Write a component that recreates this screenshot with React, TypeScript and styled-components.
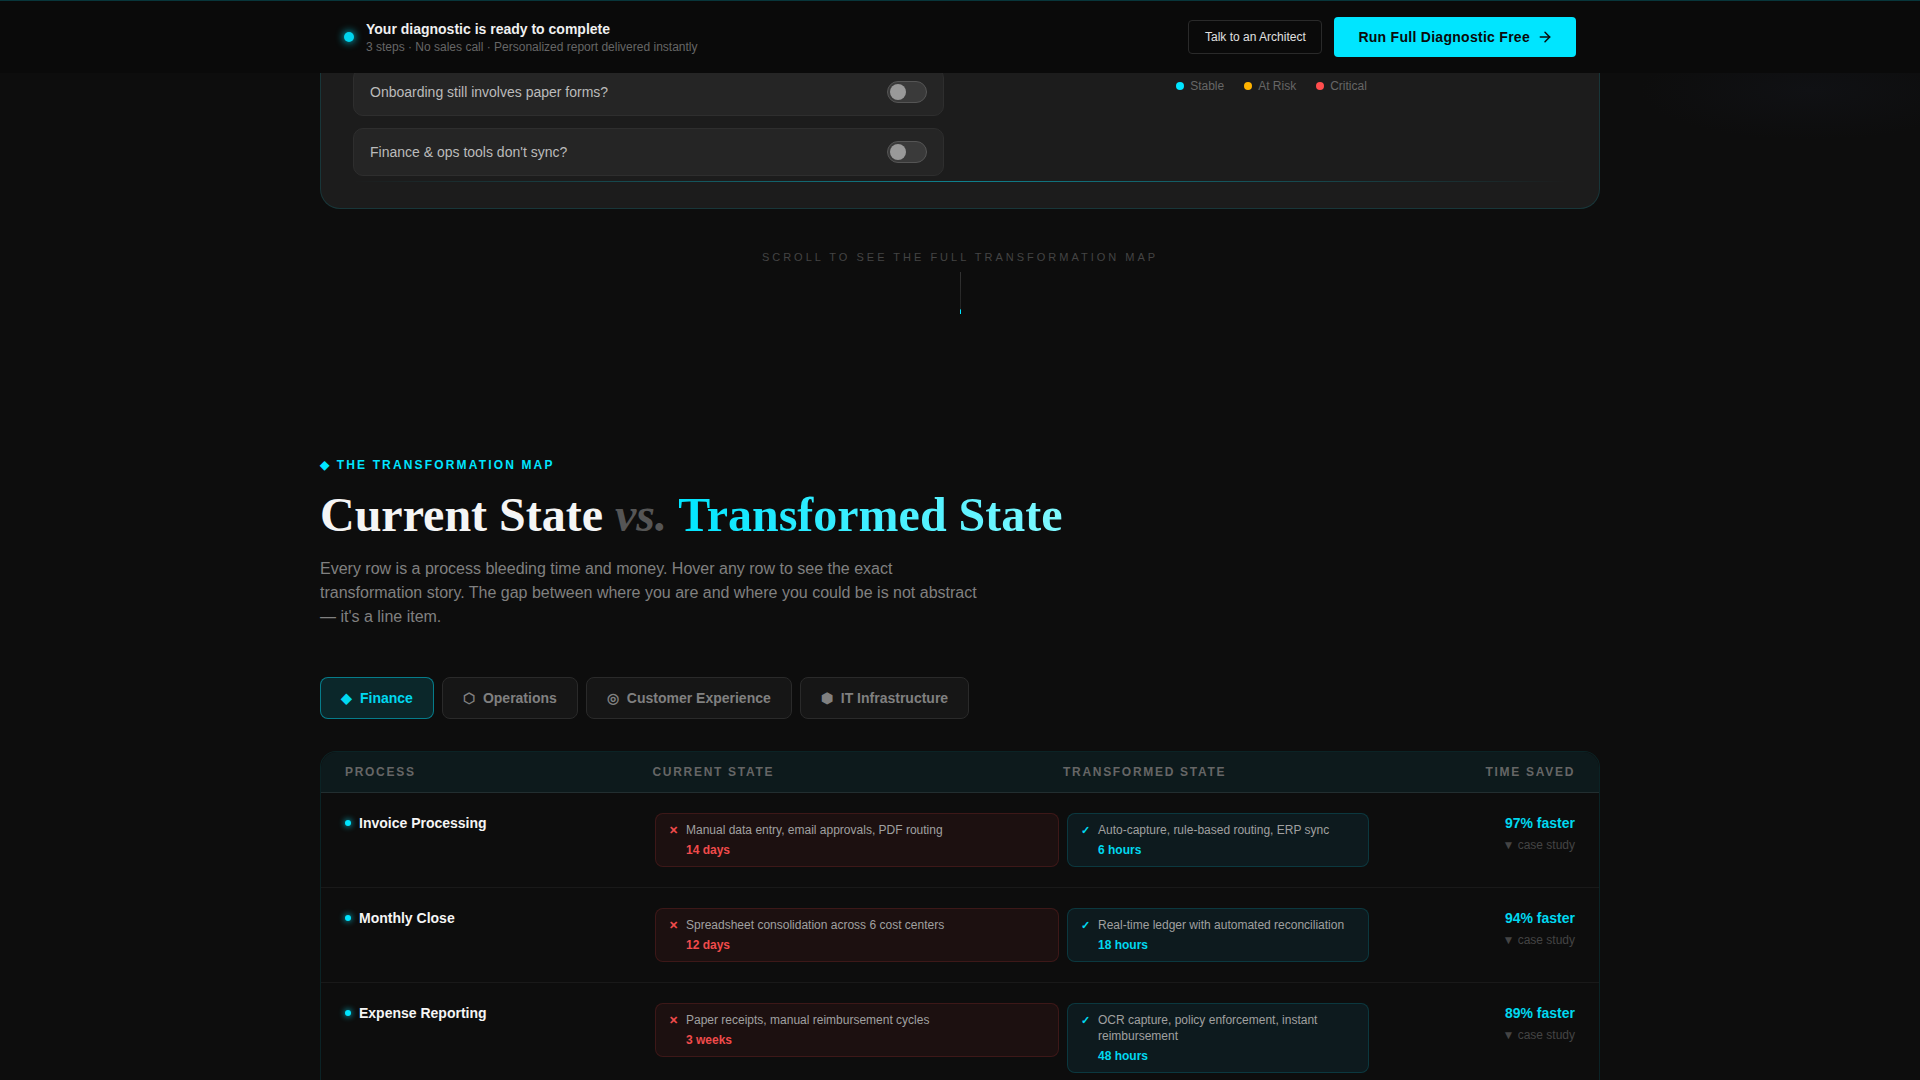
import styled, { createGlobalStyle } from 'styled-components'
import { ArrowRight } from 'lucide-react'

const CYAN = '#00e5ff'
const CYAN_TEXT = '#00d8f0'
const RED = '#ff4d4d'
const RED_TEXT = '#f04b4b'

const GlobalStyle = createGlobalStyle`
  html, body {
    margin: 0;
    height: 1080px;
    overflow: hidden;
    background: #0d0d0d;
  }
  * {
    box-sizing: border-box;
  }
  body {
    font-family: 'Liberation Sans', Arial, sans-serif;
    color: #f0f0f0;
    background: radial-gradient(ellipse 170px 50px at 1810px 90px, #101114, transparent), #0d0d0d;
  }
`

const TopBar = styled.header`
  position: fixed;
  top: 0;
  left: 0;
  right: 0;
  z-index: 10;
  height: 73px;
  background: #0a0a0a;
  border-top: 1px solid rgba(0, 229, 255, 0.2);
`

const TopBarInner = styled.div`
  width: 1280px;
  height: 100%;
  margin: 0 auto;
  padding: 0 24px;
  display: flex;
  align-items: center;
  justify-content: space-between;
`

const TopBarLead = styled.div`
  display: flex;
  align-items: center;
  gap: 12px;
`

const PulseDot = styled.span`
  width: 10px;
  height: 10px;
  border-radius: 50%;
  background: #00d4ee;
  box-shadow: 0 0 8px ${CYAN};
`

const TopBarCopy = styled.div`
  padding-top: 2px;
`

const TopBarTitle = styled.div`
  font-size: 14px;
  font-weight: 700;
  line-height: 18px;
  color: #f0f0f0;
`

const TopBarSub = styled.div`
  font-size: 12px;
  line-height: 18px;
  color: #666;
`

const TopBarActions = styled.div`
  display: flex;
  align-items: center;
  gap: 12px;
`

const GhostButton = styled.button`
  width: 134px;
  height: 34px;
  padding: 0;
  background: transparent;
  border: 1px solid #2a2a2a;
  border-radius: 4px;
  font: 12px 'Liberation Sans', Arial, sans-serif;
  color: #e0e0e0;
`

const PrimaryButton = styled.button`
  height: 40px;
  padding: 0 23px 0 24px;
  display: flex;
  align-items: center;
  gap: 7px;
  background: ${CYAN};
  border: none;
  border-radius: 4px;
  font: 700 14px 'Liberation Sans', Arial, sans-serif;
  letter-spacing: 0.02em;
  color: #0a0a0a;
`

const Page = styled.main`
  width: 1280px;
  margin: 0 auto;
`

const DiagnosticCard = styled.section`
  height: 209px;
  padding: 68px 32px 0;
  background: #1c1c1c;
  border: 1px solid rgba(0, 229, 255, 0.13);
  border-top: none;
  border-radius: 0 0 20px 20px;
`

const DiagnosticColumns = styled.div`
  display: grid;
  grid-template-columns: 591px 591px;
  gap: 32px;
`

const QuestionList = styled.div`
  display: flex;
  flex-direction: column;
  gap: 12px;
`

const QuestionRow = styled.div`
  height: 48px;
  padding: 0 16px;
  display: flex;
  align-items: center;
  justify-content: space-between;
  background: #252525;
  border: 1px solid #2e2e2e;
  border-radius: 10px;
  font-size: 14px;
  color: #bbb;
`

const Toggle = styled.span`
  width: 40px;
  height: 22px;
  padding: 2px;
  display: flex;
  align-items: center;
  background: #3a3a3a;
  border: 1px solid #555;
  border-radius: 11px;

  &::before {
    content: '';
    width: 16px;
    height: 16px;
    border-radius: 50%;
    background: #999;
  }
`

const Legend = styled.div`
  display: flex;
  align-items: flex-start;
  justify-content: center;
  gap: 20px;
  padding-top: 11px;
`

const LegendItem = styled.span`
  display: flex;
  align-items: center;
  gap: 6px;
  font-size: 12px;
  line-height: 14px;
  color: #666;
`

const LegendDot = styled.span<{ $color: string }>`
  width: 8px;
  height: 8px;
  border-radius: 50%;
  background: ${(p) => p.$color};
`

const ScanLine = styled.div`
  height: 1px;
  margin: 5px 0 0;
  background: linear-gradient(90deg, transparent, rgba(0, 229, 255, 0.5), transparent);
`

const ScrollHint = styled.div`
  height: 191px;
  padding-top: 40px;
  display: flex;
  flex-direction: column;
  align-items: center;
`

const ScrollText = styled.div`
  font-size: 11px;
  line-height: 16px;
  letter-spacing: 3px;
  color: #444;
`

const ScrollLine = styled.div`
  width: 1px;
  height: 44px;
  margin-top: 7px;
  background: linear-gradient(180deg, #333 0%, #222 84%, ${CYAN} 86%, ${CYAN} 96%, transparent 96%);
`

const Eyebrow = styled.div`
  margin-top: 57px;
  font-size: 12px;
  font-weight: 700;
  line-height: 16px;
  letter-spacing: 0.18em;
  color: ${CYAN};
`

const Heading = styled.h1`
  margin: 13px 0 0;
  font-family: 'Liberation Serif', 'Times New Roman', serif;
  font-size: 48px;
  font-weight: 700;
  line-height: 58px;
  color: #f5f5f5;
`

const HeadingVs = styled.em`
  color: #555;
`

const HeadingAccent = styled.span`
  background: linear-gradient(90deg, ${CYAN}, #80f8ff);
  -webkit-background-clip: text;
  background-clip: text;
  color: transparent;
`

const Lede = styled.p`
  width: 660px;
  margin: 13px 0 0;
  font-size: 16px;
  line-height: 24px;
  color: #808080;
`

const Tabs = styled.nav`
  display: flex;
  gap: 8px;
  margin-top: 48px;
`

const Tab = styled.button<{ $active?: boolean }>`
  height: 42px;
  padding: 0 20px;
  display: flex;
  align-items: center;
  gap: 8px;
  background: ${(p) => (p.$active ? 'rgba(0, 229, 255, 0.12)' : '#161616')};
  border: 1px solid ${(p) => (p.$active ? 'rgba(0, 229, 255, 0.45)' : '#2a2a2a')};
  border-radius: 8px;
  font: 700 14px 'Liberation Sans', Arial, sans-serif;
  color: ${(p) => (p.$active ? CYAN_TEXT : '#808080')};
`

const Table = styled.section`
  margin-top: 32px;
  border: 1px solid rgba(0, 229, 255, 0.1);
  border-bottom: none;
  border-radius: 16px 16px 0 0;
`

const TableHead = styled.div`
  height: 41px;
  padding: 0 24px;
  display: grid;
  grid-template-columns: 307.5px 410.5px 1fr auto;
  align-items: center;
  background: #0d1a1c;
  border-bottom: 1px solid rgba(255, 255, 255, 0.09);
  border-radius: 16px 16px 0 0;
  font-size: 12px;
  font-weight: 700;
  letter-spacing: 1.7px;
  color: #666;
`

const Row = styled.div`
  padding: 20px 24px;
  display: grid;
  grid-template-columns: 302px 404px 302px 1fr;
  column-gap: 8px;
  align-items: start;
  border-bottom: 1px solid rgba(255, 255, 255, 0.05);
`

const ProcessName = styled.div`
  display: flex;
  align-items: center;
  gap: 8px;
  font-size: 14px;
  font-weight: 700;
  line-height: 20px;
  color: #f5f5f5;
`

const ProcessDot = styled.span`
  width: 6px;
  height: 6px;
  border-radius: 50%;
  background: ${CYAN};
  box-shadow: 0 0 6px ${CYAN};
`

const StateBox = styled.div<{ $good?: boolean }>`
  padding: 8px 12px 8px 13px;
  display: grid;
  grid-template-columns: 10px 1fr;
  column-gap: 7px;
  background: ${(p) => (p.$good ? '#0d1a1e' : '#1c1010')};
  border: 1px solid ${(p) => (p.$good ? 'rgba(0, 229, 255, 0.15)' : 'rgba(255, 77, 77, 0.15)')};
  border-radius: 8px;
`

const StateMark = styled.span<{ $good?: boolean }>`
  font-size: 11px;
  font-weight: 700;
  line-height: 17px;
  color: ${(p) => (p.$good ? CYAN_TEXT : RED_TEXT)};
`

const StateText = styled.div`
  font-size: 12px;
  line-height: 16px;
  color: #a0a0a0;
`

const StateTime = styled.div<{ $good?: boolean }>`
  margin-top: 4px;
  font-size: 12px;
  font-weight: 700;
  line-height: 16px;
  color: ${(p) => (p.$good ? CYAN_TEXT : RED_TEXT)};
`

const Saved = styled.div`
  text-align: right;
`

const SavedValue = styled.div`
  font-size: 14px;
  font-weight: 700;
  line-height: 20px;
  color: ${CYAN_TEXT};
`

const CaseStudy = styled.div`
  margin-top: 4px;
  font-size: 12px;
  line-height: 16px;
  color: #444;
`

const tabs = [
  { icon: '◆', label: 'Finance', active: true },
  { icon: '⬡', label: 'Operations' },
  { icon: '◎', label: 'Customer Experience' },
  { icon: '⬢', label: 'IT Infrastructure' },
]

const rows = [
  {
    name: 'Invoice Processing',
    current: 'Manual data entry, email approvals, PDF routing',
    currentTime: '14 days',
    next: 'Auto-capture, rule-based routing, ERP sync',
    nextTime: '6 hours',
    saved: '97% faster',
  },
  {
    name: 'Monthly Close',
    current: 'Spreadsheet consolidation across 6 cost centers',
    currentTime: '12 days',
    next: 'Real-time ledger with automated reconciliation',
    nextTime: '18 hours',
    saved: '94% faster',
  },
  {
    name: 'Expense Reporting',
    current: 'Paper receipts, manual reimbursement cycles',
    currentTime: '3 weeks',
    next: 'OCR capture, policy enforcement, instant reimbursement',
    nextTime: '48 hours',
    saved: '89% faster',
  },
]

export default function App() {
  return (
    <>
      <GlobalStyle />
      <TopBar>
        <TopBarInner>
          <TopBarLead>
            <PulseDot />
            <TopBarCopy>
              <TopBarTitle>Your diagnostic is ready to complete</TopBarTitle>
              <TopBarSub>3 steps · No sales call · Personalized report delivered instantly</TopBarSub>
            </TopBarCopy>
          </TopBarLead>
          <TopBarActions>
            <GhostButton>Talk to an Architect</GhostButton>
            <PrimaryButton>
              Run Full Diagnostic Free <ArrowRight size={16} strokeWidth={2.25} />
            </PrimaryButton>
          </TopBarActions>
        </TopBarInner>
      </TopBar>

      <Page>
        <DiagnosticCard>
          <DiagnosticColumns>
            <QuestionList>
              <QuestionRow>
                Onboarding still involves paper forms?
                <Toggle />
              </QuestionRow>
              <QuestionRow>
                Finance &amp; ops tools don't sync?
                <Toggle />
              </QuestionRow>
            </QuestionList>
            <Legend>
              <LegendItem>
                <LegendDot $color={CYAN} />
                Stable
              </LegendItem>
              <LegendItem>
                <LegendDot $color="#ffb300" />
                At Risk
              </LegendItem>
              <LegendItem>
                <LegendDot $color={RED} />
                Critical
              </LegendItem>
            </Legend>
          </DiagnosticColumns>
          <ScanLine />
        </DiagnosticCard>

        <ScrollHint>
          <ScrollText>SCROLL TO SEE THE FULL TRANSFORMATION MAP</ScrollText>
          <ScrollLine />
        </ScrollHint>

        <Eyebrow>◆ THE TRANSFORMATION MAP</Eyebrow>
        <Heading>
          Current State <HeadingVs>vs.</HeadingVs> <HeadingAccent>Transformed State</HeadingAccent>
        </Heading>
        <Lede>
          Every row is a process bleeding time and money. Hover any row to see the exact transformation story. The gap
          between where you are and where you could be is not abstract — it's a line item.
        </Lede>

        <Tabs>
          {tabs.map((tab) => (
            <Tab key={tab.label} $active={tab.active}>
              <span>{tab.icon}</span>
              {tab.label}
            </Tab>
          ))}
        </Tabs>

        <Table>
          <TableHead>
            <span>PROCESS</span>
            <span>CURRENT STATE</span>
            <span>TRANSFORMED STATE</span>
            <span>TIME SAVED</span>
          </TableHead>
          {rows.map((row) => (
            <Row key={row.name}>
              <ProcessName>
                <ProcessDot />
                {row.name}
              </ProcessName>
              <StateBox>
                <StateMark>✕</StateMark>
                <div>
                  <StateText>{row.current}</StateText>
                  <StateTime>{row.currentTime}</StateTime>
                </div>
              </StateBox>
              <StateBox $good>
                <StateMark $good>✓</StateMark>
                <div>
                  <StateText>{row.next}</StateText>
                  <StateTime $good>{row.nextTime}</StateTime>
                </div>
              </StateBox>
              <Saved>
                <SavedValue>{row.saved}</SavedValue>
                <CaseStudy>▼ case study</CaseStudy>
              </Saved>
            </Row>
          ))}
        </Table>
      </Page>
    </>
  )
}
